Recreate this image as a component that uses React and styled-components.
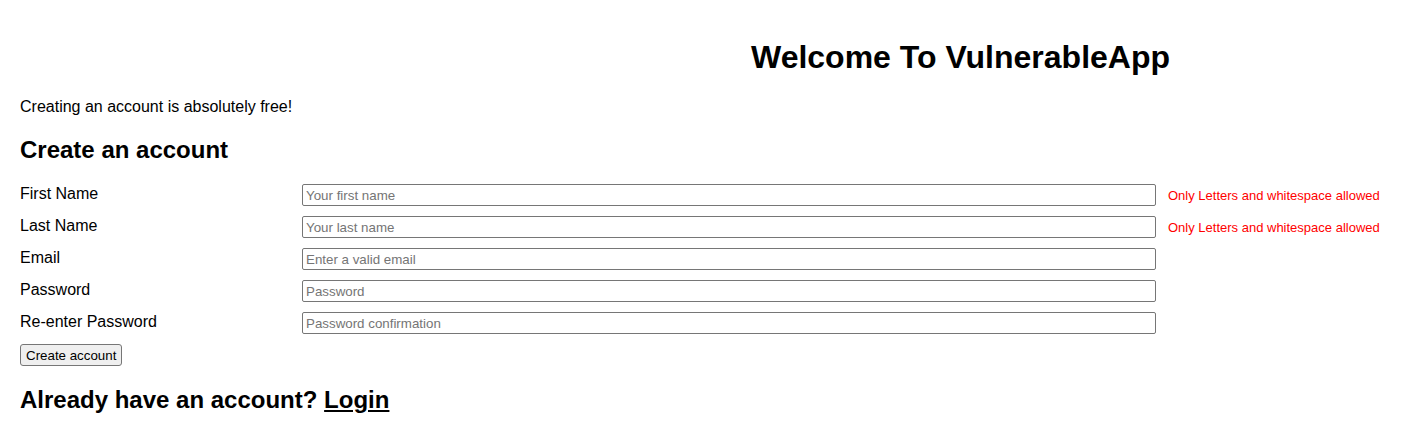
import React from "react";
import styled, { createGlobalStyle } from "styled-components";

const Global = createGlobalStyle`
  html, body { margin: 0; padding: 0; background: #fff; }
  body { font-family: "Liberation Sans", Arial, sans-serif; color: #000; }
`;

const Page = styled.div`
  padding: 39px 20px 0 20px;
  display: flex;
  flex-direction: column;
`;

const Title = styled.h1`
  margin: 0 0 22px 0;
  padding-left: 731px;
  font-size: 32px;
  font-weight: bold;
  line-height: 37px;
  white-space: nowrap;
`;

const Intro = styled.p`
  margin: 0 0 20px 0;
  font-size: 16px;
  line-height: 18px;
`;

const Heading = styled.h2`
  margin: 0;
  font-size: 24px;
  font-weight: bold;
  line-height: 28px;
`;

const Form = styled.form`
  margin-top: 20px;
  display: grid;
  grid-template-columns: 282px 854px max-content;
  column-gap: 12px;
  row-gap: 10px;
  align-items: center;
`;

const Label = styled.label`
  font-size: 16px;
  line-height: 18px;
  align-self: start;
  padding-top: 1px;
  grid-column: 1;
`;

const Input = styled.input`
  grid-column: 2;
  box-sizing: border-box;
  width: 854px;
  height: 22px;
  margin: 0 0 0 -12px;
  padding: 1px 2px 1px 3px;
  border: 1px solid #767676;
  border-radius: 2px;
  font-family: "Liberation Sans", Arial, sans-serif;
  font-size: 13.33px;
  background: #fff;
  &::placeholder { color: #757575; }
`;

const ErrorText = styled.span`
  grid-column: 3;
  margin-left: -12px;
  color: #ff0000;
  font-size: 13px;
  line-height: 15px;
  white-space: nowrap;
`;

const Button = styled.button`
  grid-column: 1;
  justify-self: start;
  box-sizing: border-box;
  height: 22px;
  padding: 1px 5px;
  background: #efefef;
  border: 1px solid #767676;
  border-radius: 3px;
  font-family: "Liberation Sans", Arial, sans-serif;
  font-size: 13.33px;
  color: #000;
  white-space: nowrap;
`;

const Footer = styled.h2`
  margin: 20px 0 0 0;
  font-size: 24px;
  font-weight: bold;
  line-height: 28px;
`;

const LoginLink = styled.a`
  color: #000;
  text-decoration: underline;
`;

const fields = [
  { label: "First Name", placeholder: "Your first name", error: "Only Letters and whitespace allowed" },
  { label: "Last Name", placeholder: "Your last name", error: "Only Letters and whitespace allowed" },
  { label: "Email", placeholder: "Enter a valid email" },
  { label: "Password", placeholder: "Password" },
  { label: "Re-enter Password", placeholder: "Password confirmation" },
];

export default function App() {
  return (
    <>
      <Global />
      <Page>
        <Title>Welcome To VulnerableApp</Title>
        <Intro>Creating an account is absolutely free!</Intro>
        <Heading>Create an account</Heading>
        <Form onSubmit={(e) => e.preventDefault()}>
          {fields.map((f) => (
            <React.Fragment key={f.label}>
              <Label>{f.label}</Label>
              <Input type="text" placeholder={f.placeholder} />
              {f.error ? <ErrorText>{f.error}</ErrorText> : <span />}
            </React.Fragment>
          ))}
          <Button type="submit">Create account</Button>
        </Form>
        <Footer>
          Already have an account? <LoginLink href="#">Login</LoginLink>
        </Footer>
      </Page>
    </>
  );
}
